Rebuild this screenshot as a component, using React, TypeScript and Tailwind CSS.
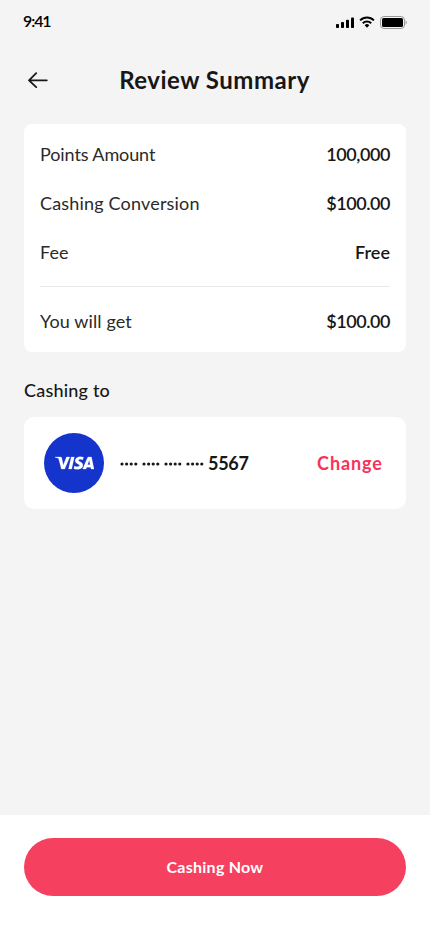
import { SiVisa } from "react-icons/si";

function StatusBar() {
  return (
    <div className="flex h-11 items-center justify-between pl-[23px] pr-[23px]">
      <span className="text-[16px] font-semibold leading-5 text-black tracking-[-1.1px] -translate-y-px">9:41</span>
      <div className="flex items-center gap-[5px]">
        <svg width="18" height="12" viewBox="0 0 18 12" fill="#000">
          <rect x="0" y="8" width="3" height="4" rx="0.8" />
          <rect x="5" y="6" width="3" height="6" rx="0.8" />
          <rect x="10" y="3.8" width="3" height="8.2" rx="0.8" />
          <rect x="15" y="1.5" width="3" height="10.5" rx="0.8" />
        </svg>
        <svg width="16" height="12" viewBox="0 0 16 12" fill="none" stroke="#000" strokeWidth="2">
          <path d="M1.1 4.4a9.8 9.8 0 0 1 13.8 0" />
          <path d="M3.8 7.2a6 6 0 0 1 8.4 0" />
          <path d="M5.7 9.2a3.3 3.3 0 0 1 4.6 0L8 11.7z" fill="#000" stroke="none" />
        </svg>
        <svg width="27" height="13" viewBox="0 0 27 13">
          <rect x="0.5" y="0.5" width="24" height="12" rx="3.4" fill="none" stroke="#999" />
          <rect x="2" y="2" width="21" height="9" rx="1.5" fill="#000" />
          <path d="M25.6 4.5v4c1.5-.6 1.5-3.4 0-4z" fill="#999" />
        </svg>
      </div>
    </div>
  );
}

function Row({ label, value, labelClass = "", valueClass = "" }: { label: string; value: string; labelClass?: string; valueClass?: string }) {
  return (
    <div className="flex h-6 items-center justify-between text-[18px] leading-6">
      <span className={`-translate-y-px text-[#2a2a2a] ${labelClass}`}>{label}</span>
      <span className={`-translate-y-px font-semibold text-[#171717] ${valueClass}`}>{value}</span>
    </div>
  );
}

function MaskedDots() {
  return (
    <svg width="84" height="4" viewBox="0 0 84 4" fill="#171717" className="translate-y-px">
      {[0, 22, 44, 66].map((x) =>
        [2, 6.6, 11.2, 15.8].map((d) => <circle key={x + d} cx={x + d} cy="2" r="1.6" />),
      )}
    </svg>
  );
}

export default function App() {
  return (
    <div className="flex h-[932px] w-[430px] flex-col overflow-hidden bg-[#f4f4f4] font-['Lato',sans-serif] text-[#171717]">
      <StatusBar />
      <header className="flex h-[80px] items-center px-[28px] pb-2">
        <svg width="20" height="16" viewBox="0 0 20 16" fill="none" stroke="#171717" strokeWidth="1.8" strokeLinecap="round" strokeLinejoin="round">
          <path d="M18.8 8.3H1M8.2 1.2L1 8.3l7.2 6.8" />
        </svg>
        <h1 className="flex-1 pr-[21px] text-center text-[24px] font-bold leading-8 tracking-[0.5px]">Review Summary</h1>
      </header>
      <main className="flex-1 px-6">
        <section className="h-[228px] rounded-lg bg-white px-4 pt-[19px]">
          <div className="flex flex-col gap-[25px]">
            <Row label="Points Amount" value="100,000" labelClass="tracking-[-0.1px]" valueClass="tracking-[-0.45px]" />
            <Row label="Cashing Conversion" value="$100.00" labelClass="tracking-[0.18px]" valueClass="tracking-[-0.45px]" />
            <Row label="Fee" value="Free" />
          </div>
          <div className="mt-[21px] mb-[23px] h-px bg-[#e9e9e9]" />
          <Row label="You will get" value="$100.00" labelClass="tracking-[0.12px]" valueClass="tracking-[-0.45px]" />
        </section>
        <h2 className="mt-[26px] text-[18px] font-medium leading-6 tracking-[0.2px]">Cashing to</h2>
        <section className="mt-[15px] flex h-[92px] items-center rounded-[10px] bg-white pl-5 pr-6">
          <div className="flex size-[60px] items-center justify-center rounded-full bg-[#1434cb] text-white">
            <SiVisa size={39} stroke="currentColor" strokeWidth={0.15} className="-translate-y-[0.5px]" />
          </div>
          <div className="ml-4 flex items-center gap-1">
            <MaskedDots />
            <span className="text-[18px] font-bold leading-6 tracking-[-0.3px]">5567</span>
          </div>
          <button className="ml-auto mr-[-0.8px] text-[18px] font-bold leading-6 tracking-[0.9px] text-[#f83358]">Change</button>
        </section>
      </main>
      <footer className="h-[117px] bg-white px-6 pt-[23px]">
        <button className="h-[58px] w-full rounded-full bg-[#f54060] text-[16px] font-bold tracking-[0.25px] text-white">Cashing Now</button>
      </footer>
    </div>
  );
}
